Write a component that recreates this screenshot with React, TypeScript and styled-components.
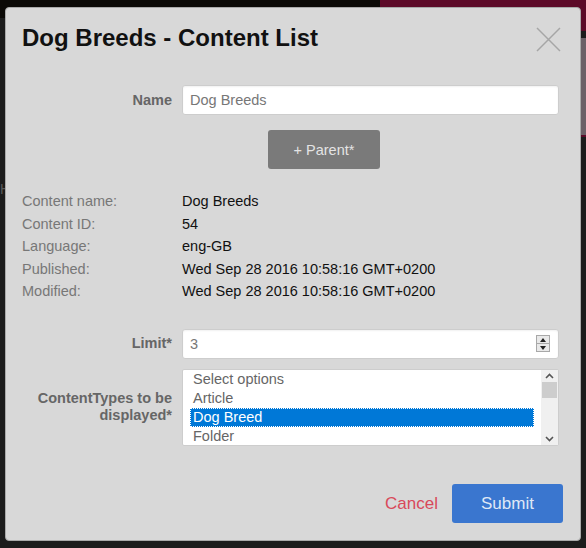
import React from "react";
import styled, { createGlobalStyle } from "styled-components";

const GlobalStyle = createGlobalStyle`
  html, body {
    margin: 0;
    padding: 0;
    background: #1c1c1c;
    font-family: "Liberation Sans", Arial, sans-serif;
  }
  * {
    box-sizing: border-box;
  }
`;

const Page = styled.div`
  position: relative;
  width: 586px;
  height: 548px;
  overflow: hidden;
  background: #1c1c1c;
`;

const TopBar = styled.div`
  display: flex;
  height: 31px;
`;

const TopDark = styled.div`
  flex: 1;
  height: 18px;
  background: #0b0906;
`;

const PinkTab = styled.div`
  width: 206px;
  height: 31px;
  background: #5c0a28;
  display: flex;
  align-items: center;
  gap: 14px;
  padding-left: 20px;
  color: #a48a94;
  font-size: 15px;
`;

const SidePanel = styled.div`
  margin: 7px 0 0 auto;
  width: 120px;
  height: 99px;
  background: #6c6067;
  border-bottom: 2px solid #5c0a28;
`;

const StrayLetter = styled.div`
  margin-top: 44px;
  color: #5a5a5a;
  font-size: 14px;
`;

const Modal = styled.div`
  position: absolute;
  left: 5px;
  top: 7px;
  width: 576px;
  height: 534px;
  background: #d8d8d8;
  border: 1px solid #a9a9a9;
  border-radius: 4px;
  display: flex;
  flex-direction: column;
  padding: 0 21px 0 16px;
`;

const Header = styled.div`
  display: flex;
  align-items: center;
  justify-content: space-between;
  padding-top: 15px;
`;

const Title = styled.h1`
  margin: 0;
  font-size: 24px;
  line-height: 30px;
  font-weight: 700;
  color: #111;
`;

const CloseButton = styled.button`
  display: flex;
  padding: 0;
  margin: 3px -2px 0 0;
  border: 0;
  background: none;
  cursor: pointer;
`;

const FieldRow = styled.div`
  display: grid;
  grid-template-columns: 150px 1fr;
  column-gap: 10px;
  align-items: center;
`;

const FieldLabel = styled.label`
  text-align: right;
  font-weight: 700;
  font-size: 14.5px;
  line-height: 17px;
  color: #666;
`;

const Spaced = styled.div<{ $top: number }>`
  margin-top: ${(p) => p.$top}px;
`;

const Input = styled.div<{ $height: number }>`
  display: flex;
  align-items: center;
  height: ${(p) => p.$height}px;
  padding-left: 7px;
  background: #fff;
  border: 1px solid #cdcdcd;
  border-radius: 3px;
  box-shadow: inset 0 1px 2px rgba(0, 0, 0, 0.06);
  font-size: 14.5px;
  color: #777;
`;

const Spinner = styled.div`
  margin-left: auto;
  margin-right: 8px;
  width: 14px;
  height: 17px;
  display: flex;
  flex-direction: column;
  border: 1px solid #a8a8a8;
  background: #e9e9e9;
`;

const SpinHalf = styled.div<{ $up?: boolean }>`
  flex: 1;
  display: flex;
  align-items: center;
  justify-content: center;
  border-top: ${(p) => (p.$up ? "none" : "1px solid #a8a8a8")};
  &::after {
    content: "";
    border-left: 3px solid transparent;
    border-right: 3px solid transparent;
    ${(p) =>
      p.$up ? "border-bottom: 4px solid #222;" : "border-top: 4px solid #222;"}
  }
`;

const ParentButton = styled.button`
  margin: 15px 0 0 86px;
  width: 112px;
  height: 39px;
  border: 0;
  border-radius: 3px;
  background: #7a7a7a;
  color: #e4e4e4;
  font-family: inherit;
  font-size: 14.5px;
`;

const InfoList = styled.dl`
  margin: 21px 0 0 0;
  display: grid;
  grid-template-columns: 160px 1fr;
  font-size: 14.5px;
  line-height: 22.5px;
`;

const InfoTerm = styled.dt`
  color: #777;
`;

const InfoValue = styled.dd`
  margin: 0;
  color: #111;
`;

const ListBox = styled.div`
  display: flex;
  height: 77px;
  background: #fff;
  border: 1px solid #cdcdcd;
  border-radius: 2px;
  overflow: hidden;
`;

const Options = styled.div`
  flex: 1;
  padding: 0 7px;
`;

const Option = styled.div<{ $selected?: boolean }>`
  height: 19px;
  line-height: 19px;
  padding-left: 3px;
  font-size: 14.5px;
  color: ${(p) => (p.$selected ? "#fff" : "#666")};
  background: ${(p) => (p.$selected ? "#0078d7" : "transparent")};
  outline: ${(p) => (p.$selected ? "1px dotted #fff" : "none")};
  outline-offset: -1px;
`;

const Scrollbar = styled.div`
  width: 17px;
  display: flex;
  flex-direction: column;
  align-items: center;
  background: #f0f0f0;
  padding: 3px 0;
`;

const ScrollThumb = styled.div`
  width: 15px;
  height: 16px;
  margin-top: 3px;
  background: #cdcdcd;
`;

const ScrollTrack = styled.div`
  flex: 1;
`;

const Footer = styled.div`
  margin-top: auto;
  margin-bottom: 17px;
  margin-right: -4px;
  display: flex;
  justify-content: flex-end;
  align-items: center;
  gap: 14px;
`;

const CancelButton = styled.button`
  border: 0;
  background: none;
  padding: 0;
  color: #d8495a;
  font-family: inherit;
  font-size: 17px;
  cursor: pointer;
`;

const SubmitButton = styled.button`
  width: 111px;
  height: 39px;
  border: 0;
  border-radius: 3px;
  background: #3a76cf;
  color: #dfe8f6;
  font-family: inherit;
  font-size: 17px;
  cursor: pointer;
`;

const Chevron: React.FC<{ up?: boolean }> = ({ up }) => (
  <svg width="9" height="6" viewBox="0 0 9 6">
    <path
      d={up ? "M1 5 L4.5 1.5 L8 5" : "M1 1 L4.5 4.5 L8 1"}
      fill="none"
      stroke="#555"
      strokeWidth="1.6"
    />
  </svg>
);

const info: [string, string][] = [
  ["Content name:", "Dog Breeds"],
  ["Content ID:", "54"],
  ["Language:", "eng-GB"],
  ["Published:", "Wed Sep 28 2016 10:58:16 GMT+0200"],
  ["Modified:", "Wed Sep 28 2016 10:58:16 GMT+0200"],
];

const contentTypes = ["Select options", "Article", "Dog Breed", "Folder"];

const App: React.FC = () => {
  return (
    <Page>
      <GlobalStyle />
      <TopBar>
        <TopDark />
        <PinkTab>
          <svg width="14" height="10" viewBox="0 0 14 10">
            <rect x="0" y="0" width="3" height="10" fill="#a48a94" />
            <rect x="5" y="0" width="3" height="10" fill="#a48a94" />
            <rect x="10" y="0" width="3" height="10" fill="#a48a94" />
          </svg>
          <span>Content List</span>
        </PinkTab>
      </TopBar>
      <SidePanel />
      <StrayLetter>H</StrayLetter>

      <Modal>
        <Header>
          <Title>Dog Breeds - Content List</Title>
          <CloseButton aria-label="Close">
            <svg width="25" height="25" viewBox="0 0 25 25">
              <path
                d="M1 1 L24 24 M24 1 L1 24"
                stroke="#a6a6a6"
                strokeWidth="1.5"
              />
            </svg>
          </CloseButton>
        </Header>

        <Spaced $top={32}>
          <FieldRow>
            <FieldLabel>Name</FieldLabel>
            <Input $height={30}>Dog Breeds</Input>
          </FieldRow>
        </Spaced>
        <FieldRow>
          <span />
          <ParentButton>+ Parent*</ParentButton>
        </FieldRow>

        <InfoList>
          {info.map(([term, value]) => (
            <React.Fragment key={term}>
              <InfoTerm>{term}</InfoTerm>
              <InfoValue>{value}</InfoValue>
            </React.Fragment>
          ))}
        </InfoList>

        <Spaced $top={26}>
          <FieldRow>
            <FieldLabel>Limit*</FieldLabel>
            <Input $height={30}>
              3
              <Spinner>
                <SpinHalf $up />
                <SpinHalf />
              </Spinner>
            </Input>
          </FieldRow>
        </Spaced>

        <Spaced $top={10}>
          <FieldRow>
            <FieldLabel>ContentTypes to be displayed*</FieldLabel>
            <ListBox>
              <Options>
                {contentTypes.map((type) => (
                  <Option key={type} $selected={type === "Dog Breed"}>
                    {type}
                  </Option>
                ))}
              </Options>
              <Scrollbar>
                <Chevron up />
                <ScrollThumb />
                <ScrollTrack />
                <Chevron />
              </Scrollbar>
            </ListBox>
          </FieldRow>
        </Spaced>

        <Footer>
          <CancelButton>Cancel</CancelButton>
          <SubmitButton>Submit</SubmitButton>
        </Footer>
      </Modal>
    </Page>
  );
};

export default App;
